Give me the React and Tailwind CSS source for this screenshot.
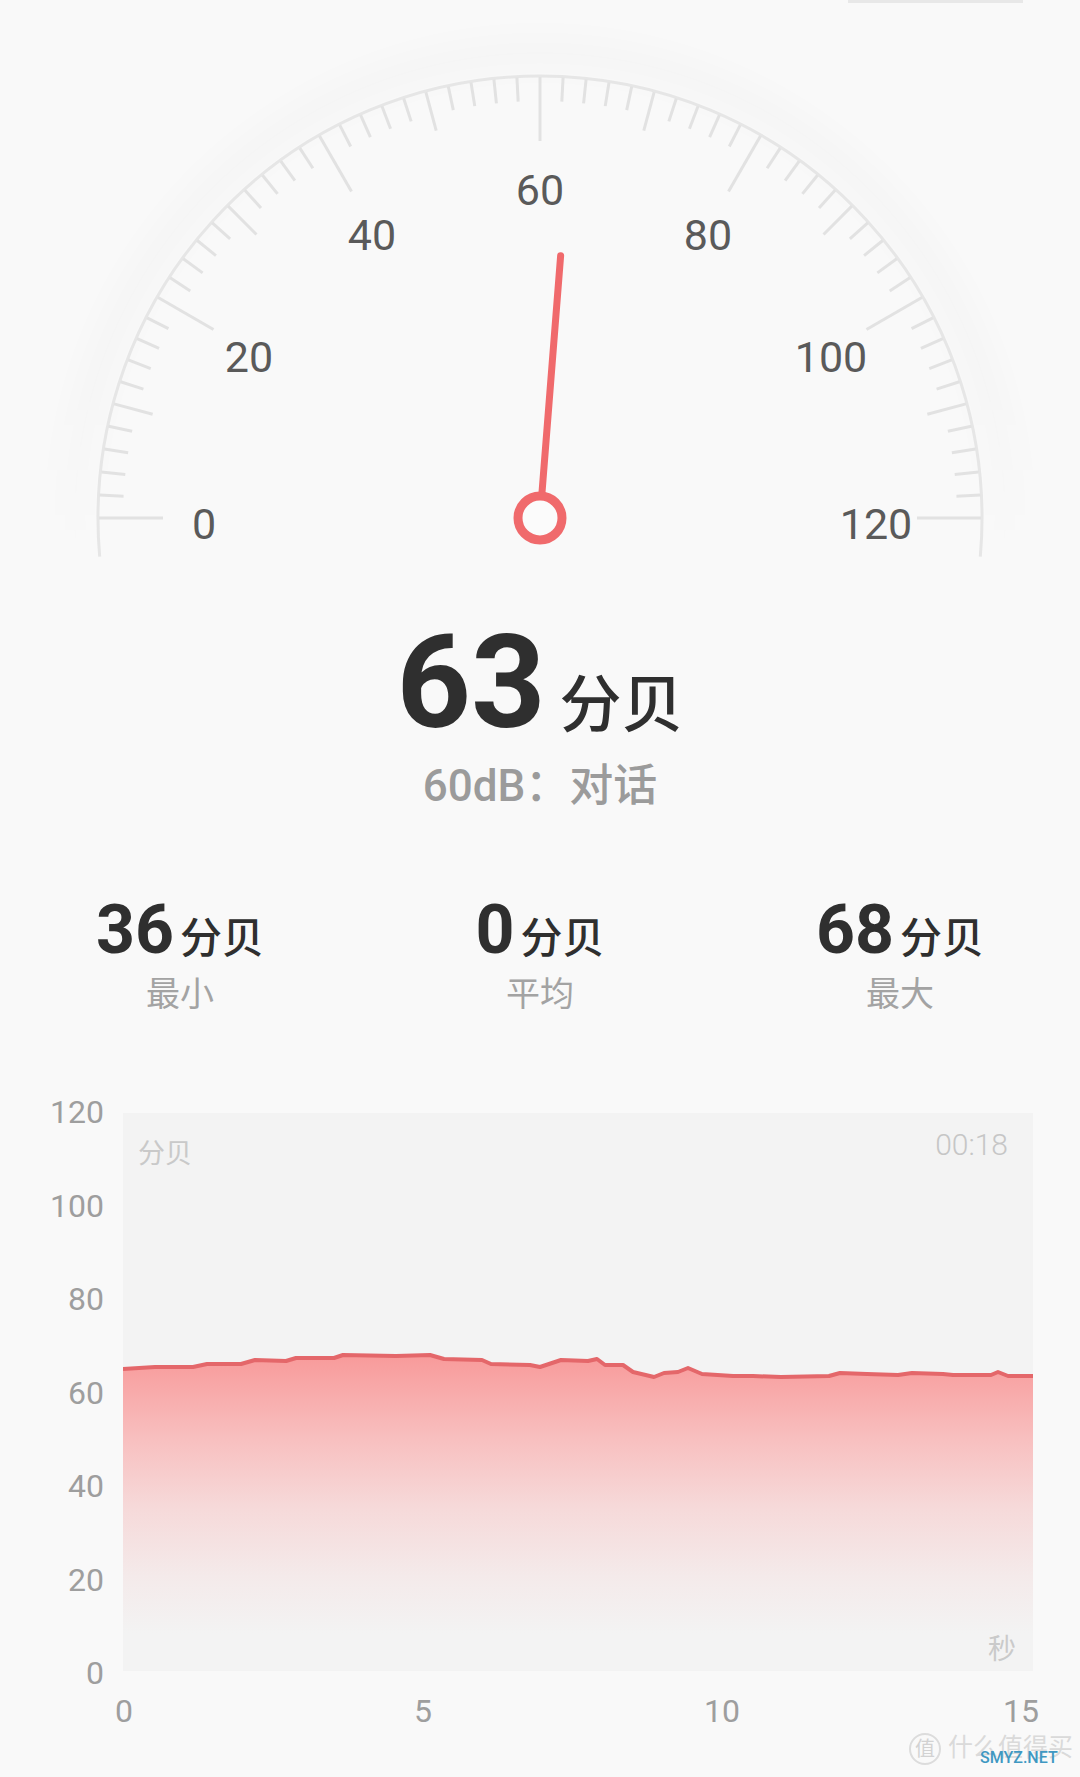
import React from "react"

const CX = 540
const CY = 518
const R = 442

function polar(r, deg) {
  const a = (deg * Math.PI) / 180
  return [CX + r * Math.cos(a), CY - r * Math.sin(a)]
}

function Gauge({ value }) {
  const ticks = []
  for (let v = 0; v <= 120; v += 2) {
    const deg = 180 - v * 1.5
    const len = v % 20 === 0 ? 64 : v % 10 === 0 ? 40 : 24
    const [x1, y1] = polar(441, deg)
    const [x2, y2] = polar(441 - len, deg)
    ticks.push(<line key={v} x1={x1} y1={y1} x2={x2} y2={y2} />)
  }

  const [ax1, ay1] = polar(R, 185)
  const [ax2, ay2] = polar(R, -5)
  const deg = 180 - value * 1.5
  const [nx1, ny1] = polar(26, deg)
  const [nx2, ny2] = polar(263, deg)

  return (
    <svg width="1080" height="577" viewBox="0 3 1080 577" className="block">
      <defs>
        <radialGradient id="halo" cx={CX} cy={CY} r="500" gradientUnits="userSpaceOnUse">
          <stop offset="0.86" stopColor="#000" stopOpacity="0" />
          <stop offset="0.93" stopColor="#000" stopOpacity="0.014" />
          <stop offset="1" stopColor="#000" stopOpacity="0" />
        </radialGradient>
        <linearGradient id="haloFade" x1="0" y1="380" x2="0" y2="560" gradientUnits="userSpaceOnUse">
          <stop offset="0" stopColor="#fff" />
          <stop offset="1" stopColor="#000" />
        </linearGradient>
        <mask id="haloMask">
          <rect x="0" y="0" width="1080" height="580" fill="url(#haloFade)" />
        </mask>
      </defs>
      <circle cx={CX} cy={CY} r="500" fill="url(#halo)" mask="url(#haloMask)" />

      <path
        d={`M${ax1},${ay1} A${R},${R} 0 1 1 ${ax2},${ay2}`}
        fill="none"
        stroke="#e6e6e6"
        strokeWidth="3"
      />
      <g stroke="#e2e2e2" strokeWidth="3">{ticks}</g>

      <g fill="#5a5a5a" fontFamily="Roboto, sans-serif" fontSize="43" textAnchor="middle" dominantBaseline="central">
        {[0, 20, 40, 60, 80, 100, 120].map((v) => {
          const a = ((180 - v * 1.5) * Math.PI) / 180
          const x = CX + 336 * Math.cos(a)
          const y = 524 - 334 * Math.sin(a)
          return (
            <text key={v} x={x} y={y}>
              {v}
            </text>
          )
        })}
      </g>

      {/* needle */}
      <line x1={nx1} y1={ny1} x2={nx2} y2={ny2} stroke="#f06a6c" strokeWidth="7" strokeLinecap="round" />
      <circle cx={CX} cy={CY} r="22" fill="#fbfbfb" stroke="#f06a6c" strokeWidth="9" />
    </svg>
  )
}

const stats = [
  { value: "36", label: "最小" },
  { value: "0", label: "平均" },
  { value: "68", label: "最大" },
]

// samples of the recorded curve, page coords
const samples = [
  [123, 1368], [155, 1366], [193, 1366], [207, 1363], [241, 1363], [255, 1359],
  [286, 1360], [296, 1357], [334, 1357], [343, 1354], [396, 1355], [430, 1354],
  [444, 1358], [482, 1359], [491, 1363], [530, 1364], [540, 1366], [561, 1359],
  [588, 1360], [597, 1358], [605, 1364], [623, 1364], [633, 1371], [654, 1376],
  [664, 1372], [678, 1371], [688, 1367], [702, 1373], [733, 1375], [753, 1375],
  [781, 1376], [829, 1375], [840, 1372], [867, 1373], [898, 1374], [912, 1372],
  [943, 1373], [953, 1374], [991, 1374], [998, 1371], [1008, 1375], [1033, 1375],
]

function Chart() {
  const pts = samples.map(([x, y]) => [x - 123, y - 1112])
  const line = "M" + pts.map((p) => p.join(",")).join(" L")
  const area = `${line} L910,558 L0,558 Z`

  return (
    <>
      <div className="mt-[83px] flex">
        <div className="flex h-[597px] w-[104px] flex-col justify-between text-right text-[32px] text-[#9e9e9e]">
          {["120", "100", "80", "60", "40", "20", "0"].map((l) => (
            <div key={l} className="h-[36px] leading-[36px]">
              {l}
            </div>
          ))}
        </div>

        <div className="relative ml-[19px] mt-[19px] h-[558px] w-[910px] bg-[#f3f3f3]">
          <svg width="910" height="558" viewBox="0 0 910 558" className="block">
            <defs>
              <linearGradient id="fill" x1="0" y1="242" x2="0" y2="558" gradientUnits="userSpaceOnUse">
                <stop offset="0" stopColor="#f89a9a" />
                <stop offset="0.27" stopColor="#f8c0c0" />
                <stop offset="0.48" stopColor="#f6d9d9" />
                <stop offset="0.7" stopColor="#f4eaea" />
                <stop offset="0.88" stopColor="#f3f3f3" />
              </linearGradient>
            </defs>
            <path d={area} fill="url(#fill)" />
            <path d={line} fill="none" stroke="#e4676a" strokeWidth="4" strokeLinejoin="round" />
          </svg>
          <span className="absolute left-[15px] top-[28px] text-[27px] leading-[27px] text-[#c9c9c9]">分贝</span>
          <span className="absolute right-[25px] top-[17px] text-[30px] font-light leading-[30px] text-[#c6c6c6]">00:18</span>
          <span className="absolute bottom-[7px] right-[17px] text-[28px] leading-[28px] text-[#cacaca]">秒</span>
        </div>
      </div>

      <div className="ml-[94px] flex w-[957px] justify-between text-[32px] text-[#9e9e9e]">
        {["0", "5", "10", "15"].map((l) => (
          <div key={l} className="w-[60px] text-center leading-[40px]">
            {l}
          </div>
        ))}
      </div>
    </>
  )
}

function Watermark() {
  return (
    <div className="absolute left-[909px] top-[1733px] flex items-center">
      <div className="grid h-[32px] w-[32px] place-items-center rounded-full border-2 border-[#dcdcdc] text-[20px] leading-none text-[#d2d2d2]">
        值
      </div>
      <div className="relative ml-[7px]">
        <span className="text-[25px] leading-none text-[#dadada]">什么值得买</span>
        <span className="absolute left-[32px] top-[15px] text-[16px] font-medium leading-none text-[#3f98c2]">SMYZ.NET</span>
      </div>
    </div>
  )
}

export default function App() {
  return (
    <div className="relative h-[1777px] w-[1080px] overflow-hidden bg-[#f9f9f9] font-['Roboto','Noto_Sans_CJK_SC',sans-serif]">
      <div className="ml-[848px] h-[3px] w-[175px] bg-[#e8e8e8]" />
      <Gauge value={63} />

      <div className="mt-[38px] flex flex-col items-center">
        <div className="flex items-baseline text-[#2f2f2f]">
          <span className="text-[130px] font-bold leading-none">63</span>
          <span className="ml-[14px] text-[62px] font-medium leading-none">分贝</span>
        </div>
        <div className="mt-[16px] text-[44px] font-medium leading-none text-[#9b9b9b]">60dB：对话</div>
      </div>

      <div className="mt-[88px] grid grid-cols-3">
        {stats.map((s) => (
          <div key={s.label} className="flex flex-col items-center">
            <div className="flex items-baseline text-[#2f2f2f]">
              <span className="text-[68px] font-bold leading-none">{s.value}</span>
              <span className="ml-[6px] text-[42px] font-medium leading-none">分贝</span>
            </div>
            <div className="mt-[13px] text-[34px] leading-none text-[#a3a3a3]">{s.label}</div>
          </div>
        ))}
      </div>

      <Chart />
      <Watermark />
    </div>
  )
}
